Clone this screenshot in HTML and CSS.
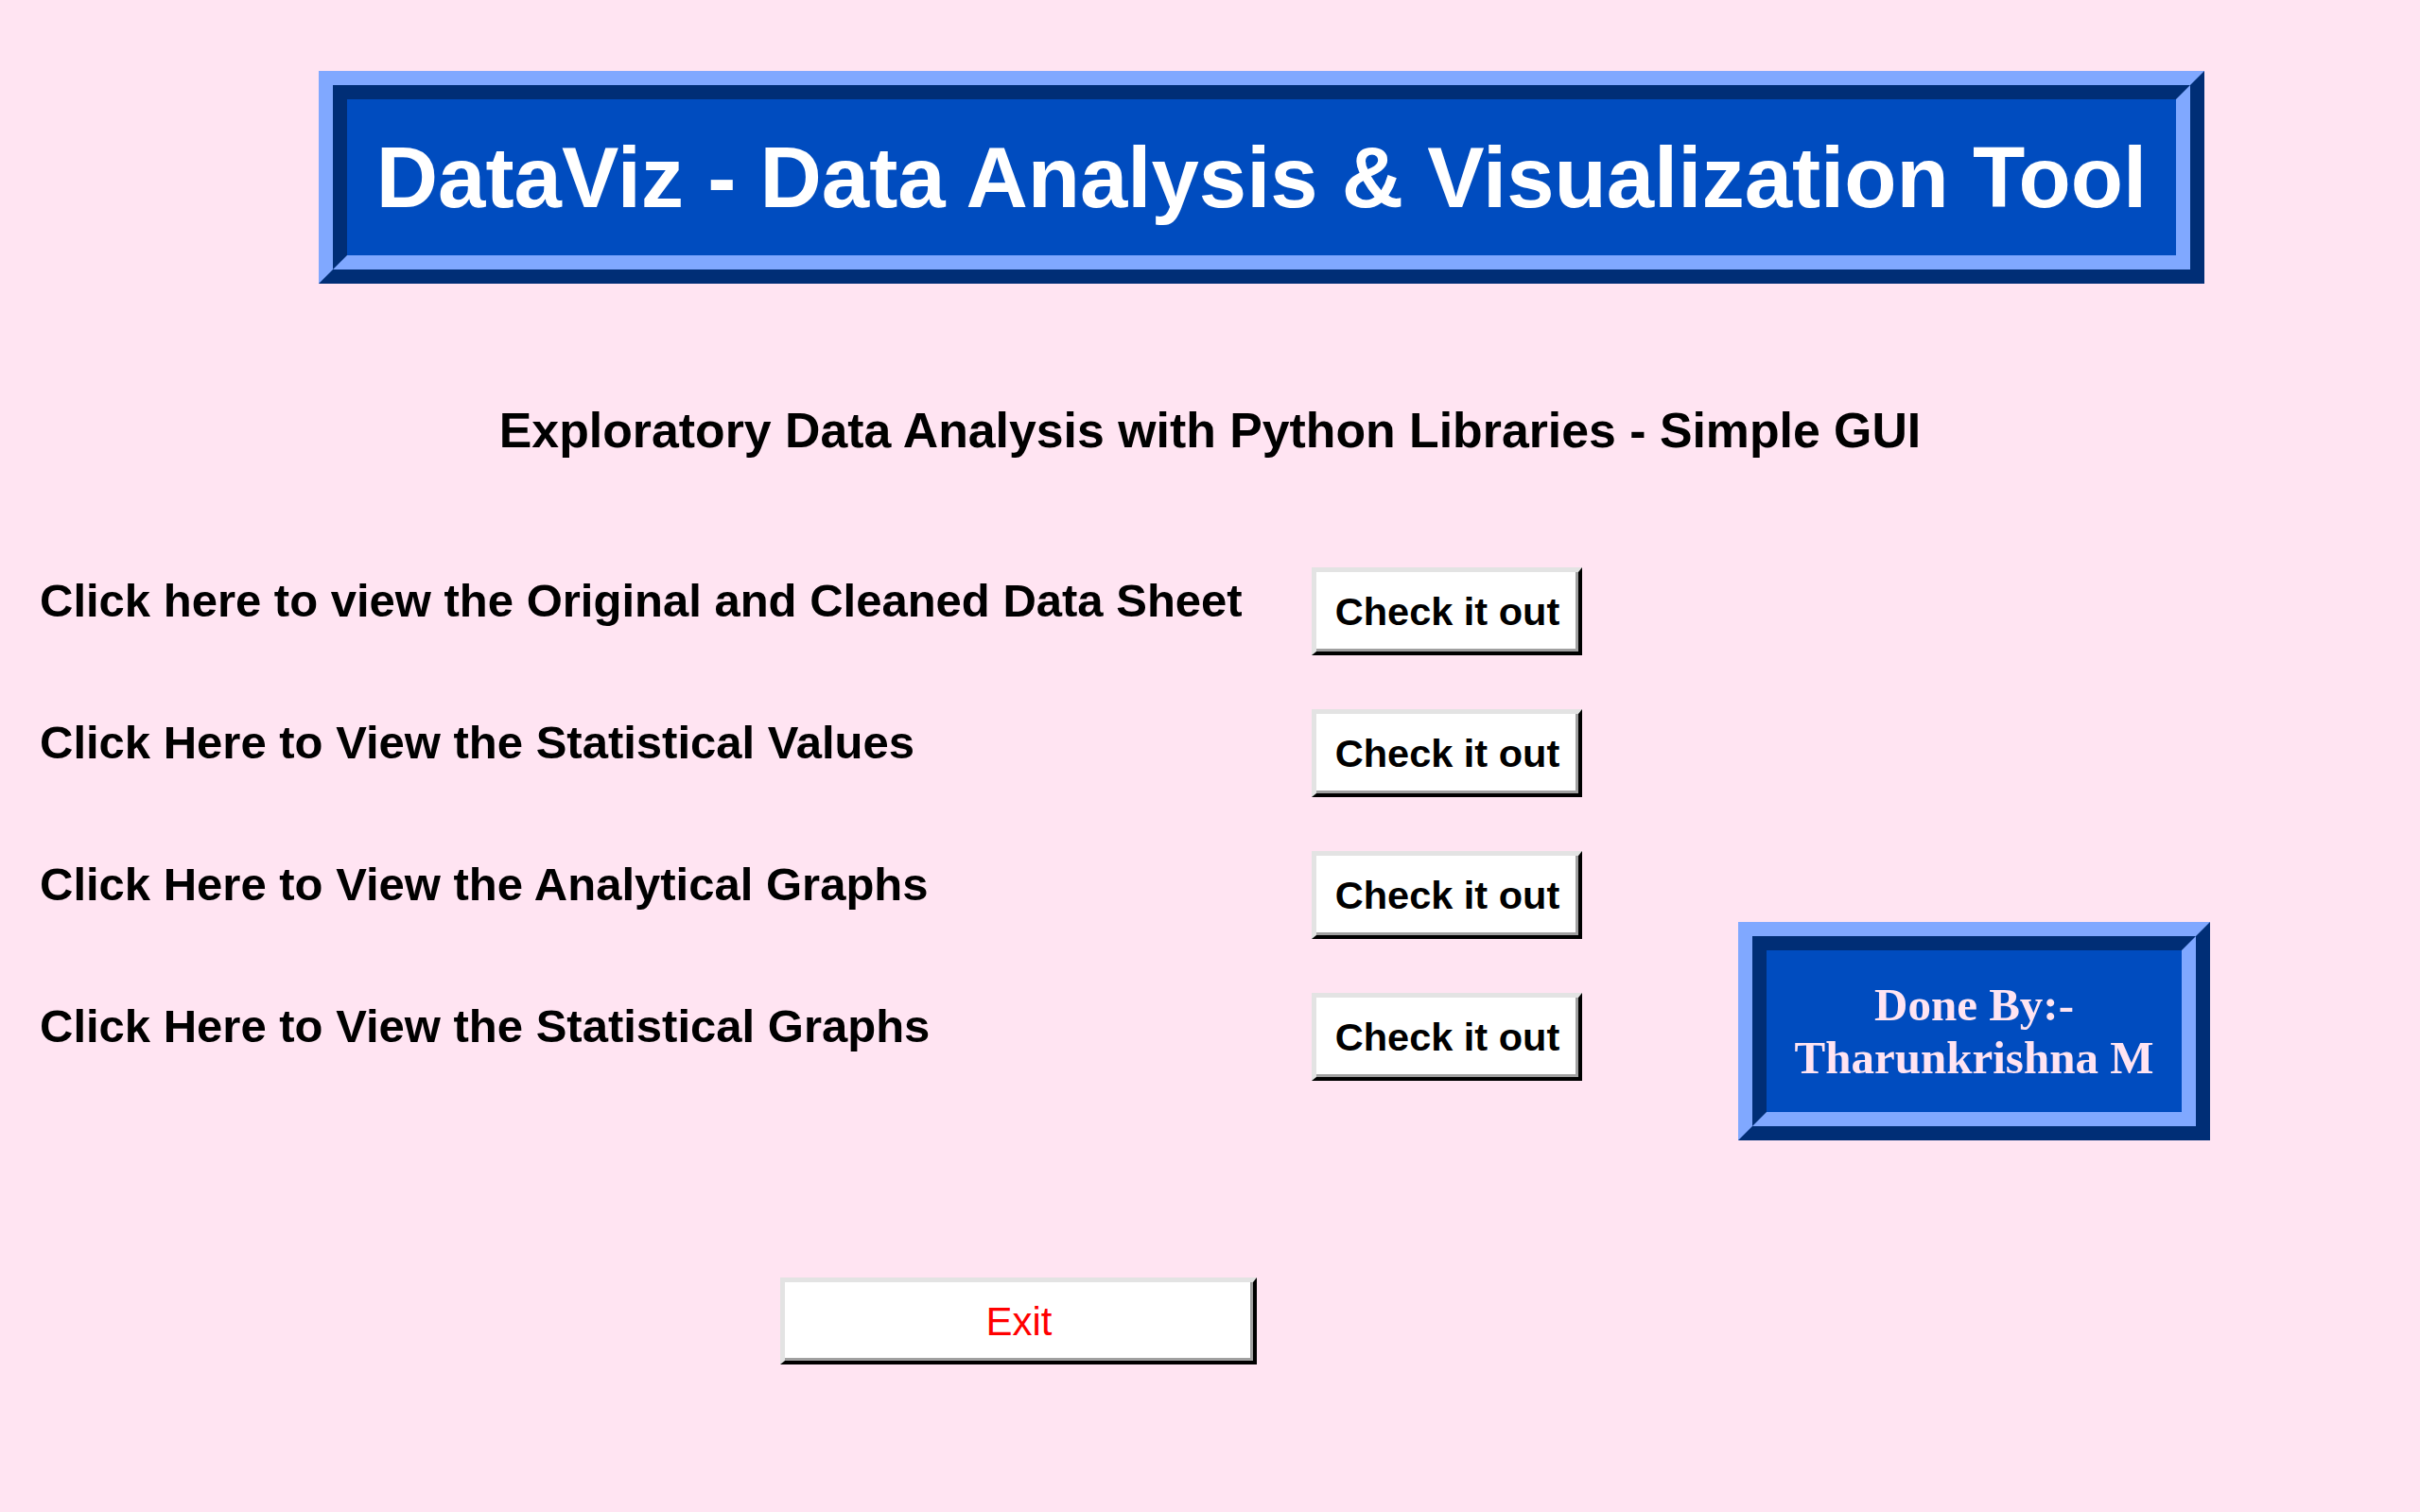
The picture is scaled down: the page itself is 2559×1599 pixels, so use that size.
FILE: index.html
```html
<!DOCTYPE html>
<html lang="en">
<head>
<meta charset="utf-8">
<title>DataViz</title>
<link rel="stylesheet" href="styles.css">
</head>
<body>
<header class="header">
  <div class="bevel title-box">
    <div class="bevel-inner">
      <h1 class="title">DataViz - Data Analysis &amp; Visualization Tool</h1>
    </div>
  </div>
</header>
<p class="subtitle">Exploratory Data Analysis with Python Libraries - Simple GUI</p>
<main class="main">
  <div class="rows">
    <div class="row"><span class="label">Click here to view the Original and Cleaned Data Sheet</span><button class="btn check">Check it out</button></div>
    <div class="row"><span class="label">Click Here to View the Statistical Values</span><button class="btn check">Check it out</button></div>
    <div class="row"><span class="label">Click Here to View the Analytical Graphs</span><button class="btn check">Check it out</button></div>
    <div class="row"><span class="label">Click Here to View the Statistical Graphs</span><button class="btn check">Check it out</button></div>
  </div>
  <aside class="bevel done-box">
    <div class="bevel-inner">
      <p class="done">Done By:-<br>Tharunkrishna M</p>
    </div>
  </aside>
</main>
<div class="exit-wrap"><button class="btn exit">Exit</button></div>
</body>
</html>
```
FILE: styles.css
```css
* { box-sizing: border-box; }
html, body {
  margin: 0;
  padding: 0;
  background: #ffe4f2;
  width: 2559px;
  height: 1599px;
  overflow: hidden;
  font-family: "Liberation Sans", Arial, sans-serif;
}
.header {
  padding-top: 75px;
  padding-left: 337px;
}
.bevel {
  border: 15px solid;
  border-color: #80a8ff #002e76 #002e76 #80a8ff;
  background: #004cbf;
}
.bevel-inner {
  height: 100%;
  border: 15px solid;
  border-color: #002e76 #80a8ff #80a8ff #002e76;
  display: flex;
  align-items: center;
  justify-content: center;
}
.title-box {
  width: 1994px;
  height: 225px;
}
.title {
  margin: 0;
  color: #ffffff;
  font-size: 90.5px;
  font-weight: bold;
  line-height: 100px;
  white-space: nowrap;
}
.subtitle {
  margin: 126px 0 0 0;
  text-align: center;
  font-size: 51.8px;
  font-weight: bold;
  line-height: 59px;
  color: #000;
}
.main {
  display: flex;
  align-items: flex-start;
  margin-top: 115px;
}
.rows {
  display: flex;
  flex-direction: column;
  gap: 57px;
}
.row {
  display: flex;
  align-items: flex-start;
}
.label {
  width: 1387px;
  padding-left: 42px;
  padding-top: 7px;
  font-size: 49px;
  font-weight: bold;
  line-height: 56px;
  color: #000;
  white-space: nowrap;
}
.btn {
  display: flex;
  align-items: center;
  justify-content: center;
  margin: 0;
  padding: 0;
  background: #ffffff;
  border-style: solid;
  border-width: 5px 4px 4px 5px;
  border-color: #e3e3e3 #000000 #000000 #e3e3e3;
  box-shadow: inset -3px -3px 0 #a0a0a0;
  font-family: "Liberation Sans", Arial, sans-serif;
  cursor: pointer;
}
.check {
  width: 286px;
  height: 93px;
  font-size: 41.5px;
  font-weight: bold;
  color: #000;
}
.done-box {
  width: 499px;
  height: 231px;
  margin-left: 165px;
  margin-top: 375px;
}
.done {
  margin: 0;
  text-align: center;
  font-family: "Liberation Serif", "Times New Roman", serif;
  font-weight: bold;
  font-size: 49px;
  line-height: 56px;
  color: #ffe4f2;
}
.exit-wrap {
  padding-left: 825px;
  margin-top: 145px;
}
.exit {
  width: 504px;
  height: 92px;
  font-size: 42px;
  font-weight: normal;
  color: #ff0000;
}
```
